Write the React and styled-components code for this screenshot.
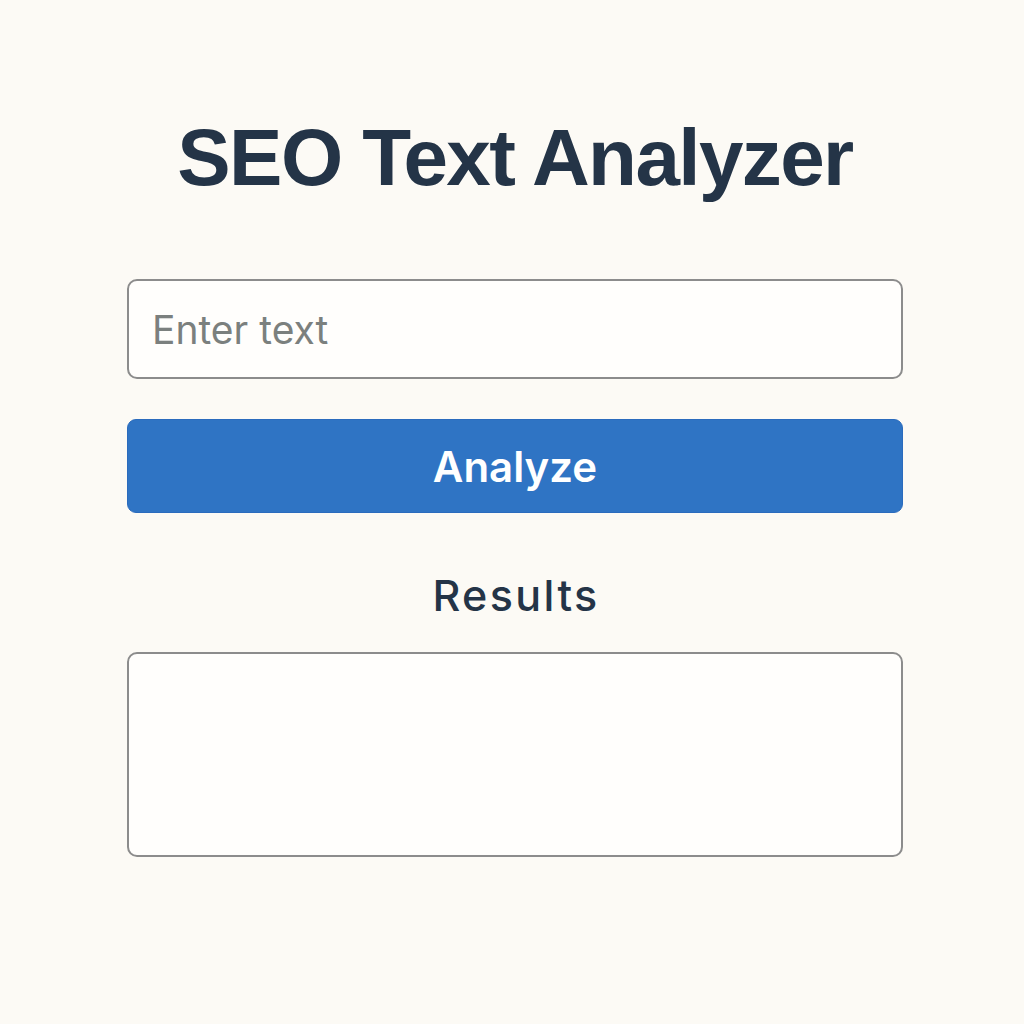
import styled, { createGlobalStyle } from 'styled-components';

const GlobalStyle = createGlobalStyle`
  html, body {
    margin: 0;
    padding: 0;
    background: #fcfaf5;
  }
  body {
    font-family: 'Liberation Sans', Arial, sans-serif;
  }
  * {
    box-sizing: border-box;
  }
`;

const Page = styled.main`
  width: 776px;
  margin: 0 0 0 calc(50% - 385px);
  padding-top: 112px;
  display: flex;
  flex-direction: column;
`;

const Title = styled.h1`
  margin: 0;
  text-align: center;
  font-family: 'Liberation Sans', Arial, sans-serif;
  font-weight: 700;
  font-size: 80px;
  line-height: 92px;
  letter-spacing: -1.6px;
  color: #243447;
`;

const TextInput = styled.input`
  margin-top: 75px;
  width: 100%;
  height: 100px;
  padding: 0 22px 0 23px;
  border: 2px solid #8c8c8c;
  border-radius: 10px;
  background: #fffefc;
  font-family: 'Inter', sans-serif;
  font-size: 39px;
  color: #243447;
  outline: none;

  &::placeholder {
    color: #7b807e;
  }
`;

const AnalyzeButton = styled.button`
  margin-top: 40px;
  width: 100%;
  height: 94px;
  border: 1px solid #2a6bbd;
  border-radius: 9px;
  background: #2f74c4;
  color: #ffffff;
  font-family: 'Inter', sans-serif;
  font-weight: 600;
  font-size: 42px;
  cursor: pointer;
`;

const SubTitle = styled.h2`
  margin: 53px 0 0;
  padding-left: 2px;
  text-align: center;
  font-family: 'Inter', sans-serif;
  font-weight: 500;
  font-size: 43px;
  line-height: 58px;
  letter-spacing: 2.4px;
  color: #243447;
`;

const ResultsBox = styled.section`
  margin-top: 28px;
  width: 100%;
  height: 205px;
  border: 2px solid #8c8c8c;
  border-radius: 10px;
  background: #fffefc;
`;

export default function App() {
  return (
    <>
      <GlobalStyle />
      <Page>
        <Title>SEO Text Analyzer</Title>
        <TextInput type="text" placeholder="Enter text" />
        <AnalyzeButton type="button">Analyze</AnalyzeButton>
        <SubTitle>Results</SubTitle>
        <ResultsBox />
      </Page>
    </>
  );
}
